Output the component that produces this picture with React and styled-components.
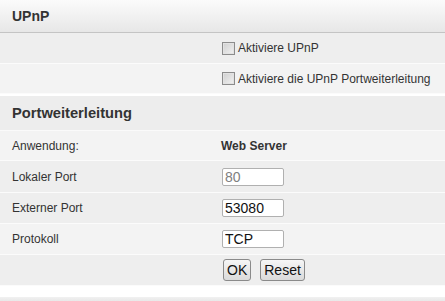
import React from "react";
import styled, { createGlobalStyle } from "styled-components";

const GlobalStyle = createGlobalStyle`
  html, body {
    margin: 0;
    padding: 0;
    background: #ffffff;
  }
  body {
    font-family: "Liberation Sans", Arial, sans-serif;
    color: #333;
  }
`;

const Page = styled.div`
  width: 445px;
  height: 301px;
  overflow: hidden;
  display: flex;
  flex-direction: column;
  background: #ffffff;
`;

const Header = styled.div`
  height: 32px;
  display: flex;
  align-items: center;
  padding-left: 12px;
  font-size: 14px;
  font-weight: bold;
  color: #333;
  background: linear-gradient(to bottom, #fbfbfb, #e7e7e7);
  border-bottom: 1px solid #c4c4c4;
`;

const SectionTitle = styled.div`
  height: 34px;
  margin-top: 2px;
  display: flex;
  align-items: center;
  padding-left: 12px;
  font-size: 14.7px;
  font-weight: bold;
  color: #333;
  background: #ededed;
  border-bottom: 1px solid #fafafa;
`;

const Row = styled.div`
  display: grid;
  grid-template-columns: 221px 1fr;
  align-items: center;
  height: ${({ $h }) => $h || 30}px;
  background: ${({ $alt }) => ($alt ? "#f3f3f3" : "#eeeeee")};
  border-bottom: 1px solid #fbfbfb;
  font-size: 12px;
  color: #333;
`;

const Label = styled.div`
  padding-left: 12px;
`;

const Value = styled.div`
  display: flex;
  align-items: center;
  gap: 9px;
  padding-left: ${({ $inset }) => $inset || 0}px;
  font-weight: ${({ $bold }) => ($bold ? "bold" : "normal")};
`;

const Check = styled.label`
  display: flex;
  align-items: center;
  gap: 3px;
  padding-left: 1px;
  font-size: 12px;
  color: #333;
`;

const Box = styled.span`
  width: 11px;
  height: 11px;
  border: 1px solid #8c8c8c;
  background: linear-gradient(to bottom right, #cfcfcf, #f2f2f2);
  box-shadow: inset 0 0 0 1px #e2e2e2;
`;

const Field = styled.input`
  box-sizing: border-box;
  width: 62px;
  height: 18px;
  margin-left: 1px;
  padding: 0 2px;
  border: 1px solid #b0b0b0;
  border-radius: 2px;
  background: #fff;
  font-family: "Liberation Sans", Arial, sans-serif;
  font-size: 14px;
  color: ${({ disabled }) => (disabled ? "#808080" : "#111")};
  outline: none;
`;

const Button = styled.button`
  box-sizing: border-box;
  height: 22px;
  padding: 0 3px;
  border: 1px solid #8a8a8a;
  border-radius: 3px;
  background: linear-gradient(to bottom, #f6f6f6, #dadada);
  font-family: "Liberation Sans", Arial, sans-serif;
  font-size: 14px;
  color: #111;
`;

const Footer = styled.div`
  margin-top: 11px;
  flex: 1;
  background: linear-gradient(to bottom, #f1f1f1, #e8e8e8);
`;

export default function App() {
  return (
    <>
      <GlobalStyle />
      <Page>
        <Header>UPnP</Header>
        <Row>
          <div />
          <Value>
            <Check>
              <Box />
              Aktiviere UPnP
            </Check>
          </Value>
        </Row>
        <Row $alt $h={29}>
          <div />
          <Value>
            <Check>
              <Box />
              Aktiviere die UPnP Portweiterleitung
            </Check>
          </Value>
        </Row>
        <SectionTitle>Portweiterleitung</SectionTitle>
        <Row $alt $h={29}>
          <Label>Anwendung:</Label>
          <Value $bold>Web Server</Value>
        </Row>
        <Row $h={31}>
          <Label>Lokaler Port</Label>
          <Value>
            <Field defaultValue="80" disabled />
          </Value>
        </Row>
        <Row>
          <Label>Externer Port</Label>
          <Value>
            <Field defaultValue="53080" />
          </Value>
        </Row>
        <Row $alt>
          <Label>Protokoll</Label>
          <Value>
            <Field defaultValue="TCP" />
          </Value>
        </Row>
        <Row $h={30}>
          <div />
          <Value $inset={2}>
            <Button>OK</Button>
            <Button>Reset</Button>
          </Value>
        </Row>
        <Footer />
      </Page>
    </>
  );
}
